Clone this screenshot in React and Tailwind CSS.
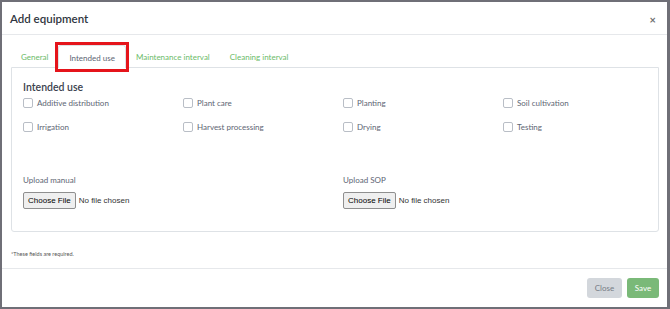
const tabs = ["General", "Intended use", "Maintenance interval", "Cleaning interval"]

const uses = [
    "Additive distribution",
    "Plant care",
    "Planting",
    "Soil cultivation",
    "Irrigation",
    "Harvest processing",
    "Drying",
    "Testing",
]

function FileInput({ label }) {
    return (
        <div>
            <div className="text-[8px] text-[#5d6573] h-[11px] leading-[11px]">{label}</div>
            <div className="mt-[6px] flex items-center">
                <button className="h-[17px] px-[4px] border border-[#8f8f8f] rounded-[2px] bg-[#efefef] text-[8px] text-black font-['Liberation_Sans',Arial,sans-serif] leading-none">
                    Choose File
                </button>
                <span className="ml-[3px] text-[8px] text-[#333] font-['Liberation_Sans',Arial,sans-serif]">No file chosen</span>
            </div>
        </div>
    )
}

export default function App() {
    return (
        <div className="w-[670px] h-[309px] bg-[#6f6f77] pl-[2px] pt-[2px] pr-[3px] pb-[2px] font-['Lato','Open_Sans',sans-serif]">
            <div className="bg-white h-full flex flex-col">
                {/* header */}
                <div className="h-[33px] pt-[2px] pl-[8px] pr-[9px] flex items-center justify-between border-b border-[#e6e8eb]">
                    <h1 className="text-[11.5px] font-semibold text-[#2f3640]">Add equipment</h1>
                    <span className="text-[11px] font-bold text-[#6f6f6f] leading-none mr-[2px]">×</span>
                </div>

                {/* body */}
                <div className="pt-[10px] pl-[9px] pr-[8px]">
                    <div className="flex h-[22px]">
                        {tabs.map((t, i) => (
                            <div
                                key={t}
                                className={
                                    i === 1
                                        ? "relative px-[10px] pt-[1px] flex items-center text-[8px] text-[#5d6573] bg-white border border-b-0 border-[#dee2e6] rounded-t-[3px] -mb-px z-10"
                                        : "px-[10px] pt-[1px] flex items-center text-[8px] text-[#6cbb69]"
                                }
                            >
                                {t}
                                {i === 1 && (
                                    <div className="absolute -left-[4px] -right-[4px] -top-[4px] -bottom-[4px] border-[3px] border-[#e5141b]" />
                                )}
                            </div>
                        ))}
                    </div>
                    <div className="h-[165px] border border-[#dee2e6] rounded-b-[3px] pl-[11px] pt-[13px]">
                        <h2 className="text-[10.5px] font-semibold text-[#3a414d] leading-[13px]">Intended use</h2>
                        <div className="mt-[3px] grid grid-cols-[160px_160px_160px_160px] gap-y-[12px]">
                            {uses.map((u) => (
                                <label key={u} className="flex items-center h-[12px]">
                                    <span className="w-[10px] h-[10px] rounded-[2px] border border-[#b9bec6] bg-white" />
                                    <span className="ml-[4px] text-[8px] text-[#5d6573]">{u}</span>
                                </label>
                            ))}
                        </div>
                        <div className="mt-[42px] grid grid-cols-[320px_320px]">
                            <FileInput label="Upload manual" />
                            <FileInput label="Upload SOP" />
                        </div>
                    </div>
                    <p className="mt-[18px] text-[5.5px] text-[#555] leading-[8px]">*These fields are required.</p>
                </div>

                {/* footer */}
                <div className="mt-auto h-[39px] border-t border-[#e6e8eb] flex items-center justify-end gap-[5px] pr-[8px]">
                    <button className="h-[20px] w-[35px] rounded-[3px] bg-[#d3d7dc] text-[8px] text-[#767c85]">Close</button>
                    <button className="h-[20px] w-[32px] rounded-[3px] bg-[#7ab978] text-[8px] text-white">Save</button>
                </div>
            </div>
        </div>
    )
}
